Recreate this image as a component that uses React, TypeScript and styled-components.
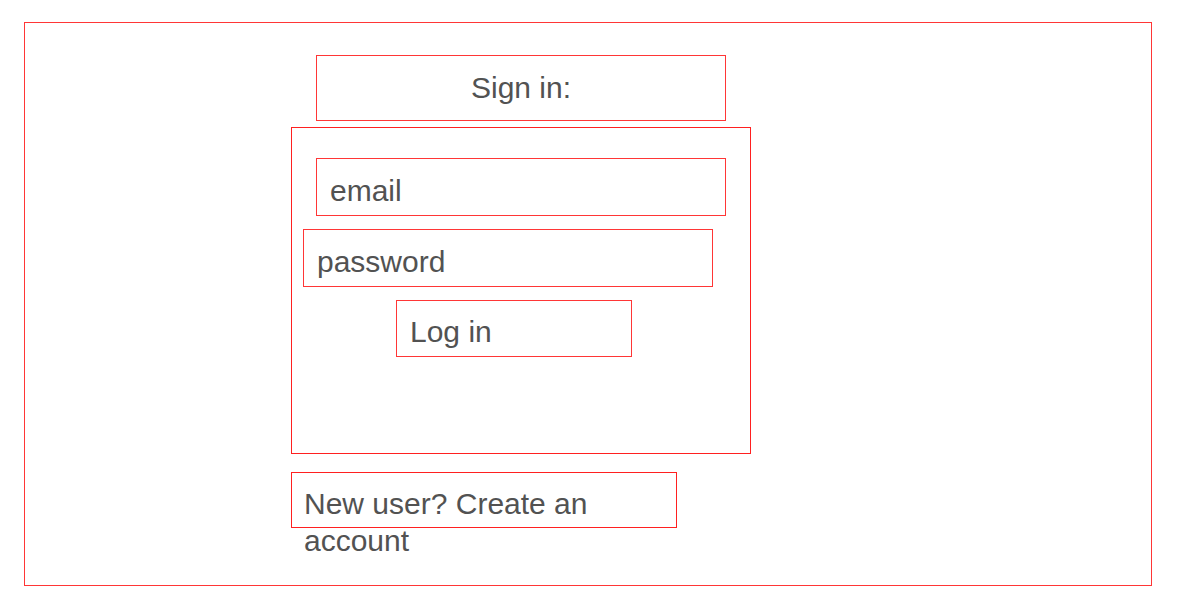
import React from 'react';
import styled, { createGlobalStyle } from 'styled-components';

const GlobalStyle = createGlobalStyle`
  html, body {
    margin: 0;
    padding: 0;
    background: #ffffff;
  }
  body {
    font-family: "Liberation Sans", Arial, sans-serif;
    color: #525252;
  }
  * {
    box-sizing: border-box;
  }
`;

const Page = styled.div`
  padding: 22px 0 0 24px;
`;

const Frame = styled.div`
  width: 1128px;
  height: 564px;
  border: 1px solid #ff3636;
  padding: 32px 0 0 266px;
  display: flex;
  flex-direction: column;
  align-items: flex-start;
`;

const Heading = styled.h1`
  margin: 0 0 6px 25px;
  width: 410px;
  height: 66px;
  border: 1px solid #ff3636;
  padding: 13px 12px 0;
  font-size: 30px;
  font-weight: normal;
  line-height: 37px;
  text-align: center;
`;

const LoginForm = styled.form`
  width: 460px;
  height: 327px;
  margin: 0;
  border: 1px solid #ff2020;
  padding: 30px 0 0;
  display: flex;
  flex-direction: column;
  align-items: flex-start;
  gap: 13px;
`;

const Field = styled.input<{ $indent: number }>`
  margin-left: ${props => props.$indent}px;
  width: 410px;
  height: 58px;
  border: 1px solid #ff3636;
  border-radius: 0;
  padding: 13px 12px 6px 13px;
  font-family: "Liberation Sans", Arial, sans-serif;
  font-size: 30px;
  line-height: 37px;
  color: #525252;
  background: transparent;
  outline: none;

  &::placeholder {
    color: #525252;
    opacity: 1;
  }
`;

const SubmitButton = styled.button`
  margin-left: 104px;
  width: 236px;
  height: 57px;
  border: 1px solid #ff3636;
  border-radius: 0;
  padding: 12px 12px 6px 13px;
  background: transparent;
  font-family: "Liberation Sans", Arial, sans-serif;
  font-size: 30px;
  line-height: 37px;
  color: #525252;
  text-align: left;
  cursor: pointer;
`;

const SignupLink = styled.div`
  margin-top: 18px;
  width: 386px;
  height: 56px;
  border: 1px solid #ff2020;
  padding: 12px 12px 0;
  font-size: 30px;
  line-height: 37px;
  color: #525252;
  cursor: pointer;
`;

const App: React.FC = () => {
  return (
    <>
      <GlobalStyle />
      <Page>
        <Frame>
          <Heading>Sign in:</Heading>
          <LoginForm onSubmit={e => e.preventDefault()}>
            <Field $indent={24} type="email" placeholder="email" />
            <Field $indent={11} type="password" placeholder="password" />
            <SubmitButton type="submit">Log in</SubmitButton>
          </LoginForm>
          <SignupLink>New user? Create an account</SignupLink>
        </Frame>
      </Page>
    </>
  );
};

export default App;
